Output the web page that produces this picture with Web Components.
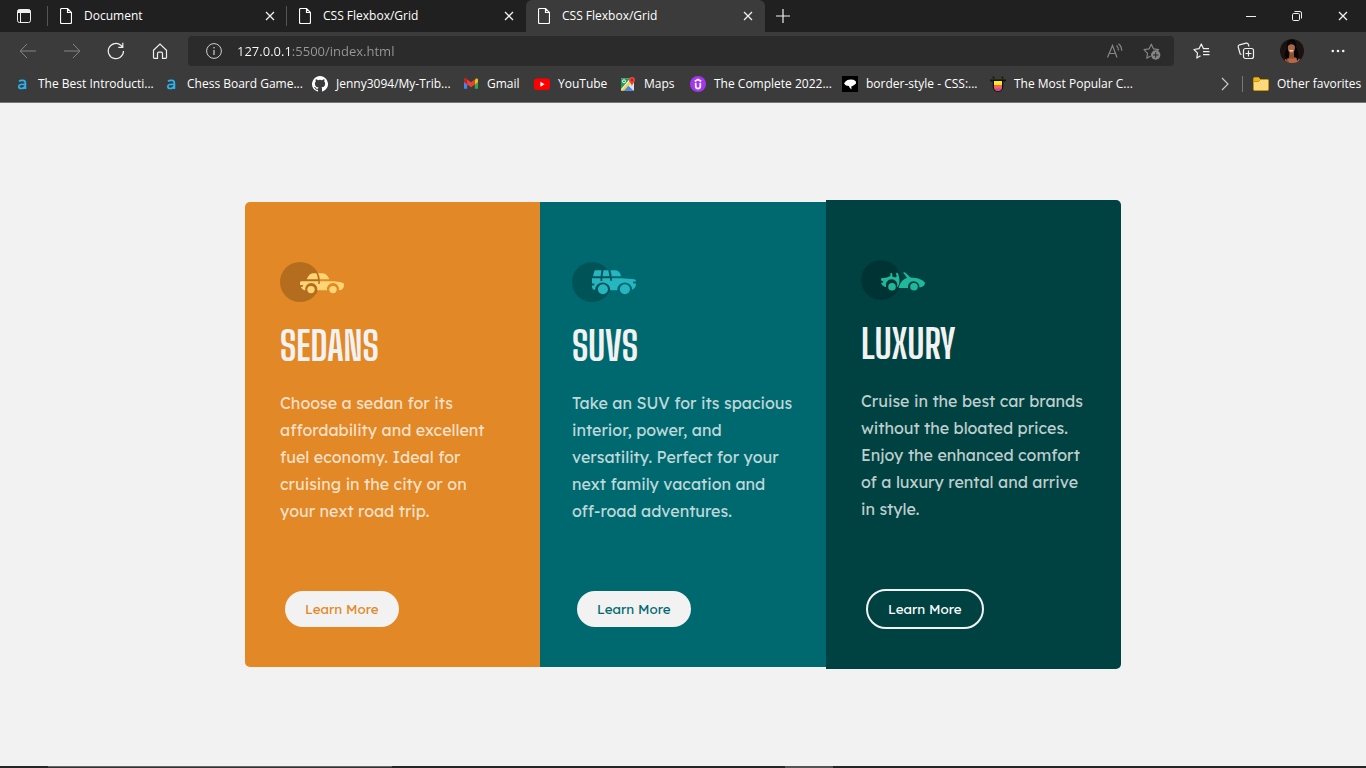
<!DOCTYPE html>
<html lang="en">
<head>
<meta charset="utf-8">
<title>CSS Flexbox/Grid</title>
<style>
  html, body { height: 100%; margin: 0; }
  body { background: #f2f2f2; --ui: "Segoe UI", Selawik, "Open Sans", "Noto Sans", sans-serif; }
</style>
</head>
<body>
<browser-window>
  <tab-strip slot="tabs">
    <browser-tab>Document</browser-tab>
    <browser-tab>CSS Flexbox/Grid</browser-tab>
    <browser-tab active>CSS Flexbox/Grid</browser-tab>
  </tab-strip>
  <tool-bar slot="toolbar"></tool-bar>
  <favorites-bar slot="favorites">
    <book-mark icon="letter" style="--w:149px">The Best Introducti...</book-mark>
    <book-mark icon="letter" style="--w:149px">Chess Board Game...</book-mark>
    <book-mark icon="github" style="--w:151px">Jenny3094/My-Trib...</book-mark>
    <book-mark icon="gmail" style="--w:71px">Gmail</book-mark>
    <book-mark icon="youtube" style="--w:86px">YouTube</book-mark>
    <book-mark icon="maps" style="--w:70px">Maps</book-mark>
    <book-mark icon="udemy" style="--w:152px">The Complete 2022...</book-mark>
    <book-mark icon="csstricks" style="--w:148px">border-style - CSS:...</book-mark>
    <book-mark icon="tongue" style="--w:149px">The Most Popular C...</book-mark>
    <book-mark slot="end" icon="folder" style="--w:105px">Other favorites</book-mark>
  </favorites-bar>
  <card-row>
    <car-card kind="sedans">
      <span slot="title">SEDANS</span>
      <span>Choose a sedan for its<br>affordability and excellent<br>fuel economy. Ideal for<br>cruising in the city or on<br>your next road trip.</span>
    </car-card>
    <car-card kind="suvs">
      <span slot="title">SUVS</span>
      <span>Take an SUV for its spacious<br>interior, power, and<br>versatility. Perfect for your<br>next family vacation and<br>off-road adventures.</span>
    </car-card>
    <car-card kind="luxury">
      <span slot="title">LUXURY</span>
      <span>Cruise in the best car brands<br>without the bloated prices.<br>Enjoy the enhanced comfort<br>of a luxury rental and arrive<br>in style.</span>
    </car-card>
  </card-row>
  <task-edge slot="edge"></task-edge>
</browser-window>

<script>
const stroke = 'fill="none" stroke="currentColor"';
/* name: [width, height, markup] */
const ICONS = {
  workspace: [16, 16, `<rect x="1.5" y="1.5" width="13" height="13" rx="2" ${stroke}/><path d="M1.5 5V3.5a2 2 0 0 1 2-2h9a2 2 0 0 1 2 2V5z" fill="currentColor"/><path d="M4.5 5v9.5" ${stroke}/>`],
  page: [12, 16, `<path d="M1.5.5h6l4 4v9.700a1.300 1.300 0 0 1-1.300 1.300h-8.400a1.300 1.300 0 0 1-1.300-1.300v-12.400A1.300 1.300 0 0 1 1.500.5zM7.500.5v4h4" ${stroke} stroke-width="1.200"/>`],
  close: [10, 10, `<path d="M1 1l8 8M9 1l-8 8" ${stroke} stroke-width="1.300"/>`],
  plus: [14, 14, `<path d="M7 0v14M0 7h14" ${stroke} stroke-width="1.200"/>`],
  minimize: [10, 10, `<path d="M0 5.500h10" ${stroke}/>`],
  restore: [10, 10, `<rect x=".5" y="2.500" width="7" height="7" rx="1.200" ${stroke}/><path d="M2.500.5H8A1.500 1.500 0 0 1 9.500 2v5.500" ${stroke}/>`],
  back: [18, 16, `<path d="M17 8H1.500M8 1L1.200 8 8 15" ${stroke}/>`],
  forward: [18, 16, `<path d="M1 8h15.500M10 1l6.800 7L10 15" ${stroke}/>`],
  refresh: [18, 18, `<path d="M16.500 9a7.600 7.600 0 1 1-2.600-5.700l1.600 1.700M15.800.8V5.300H11.300" ${stroke} stroke-width="1.200"/>`],
  home: [16, 16, `<path d="M1.500 7.200L8 1l6.500 6.200v7.300a.8.8 0 0 1-.8.8H10.500V10.500A1.300 1.300 0 0 0 9.200 9.200H6.800A1.300 1.300 0 0 0 5.500 10.500v4.800H2.300a.8.8 0 0 1-.8-.8z" ${stroke} stroke-width="1.200"/>`],
  info: [16, 16, `<circle cx="8" cy="8" r="7.400" ${stroke}/><path d="M8 7v5" ${stroke} stroke-width="1.200"/><circle cx="8" cy="4.800" r=".8" fill="currentColor"/>`],
  read: [18, 16, `<path d="M1.500 14.500L6.500 2.500 11 14.500M3 10.500h6.500M10.500 2.500a6 6 0 0 1 2 5M12.500.8a9 9 0 0 1 3.200 7" ${stroke} stroke-width="1.200"/>`],
  starplus: [18, 18, `<path d="M7.500 14L3.800 16.200 4.500 11.300 1 7.700l5-.8L8.300 2.200l2.300 4.700 5 .8-1.500 1.500" ${stroke} stroke-width="1.200" stroke-linejoin="round"/><circle cx="12.700" cy="13" r="4.700" fill="currentColor"/><path d="M12.700 10.300v5.400M10 13h5.400" stroke="#2b2b2b"/>`],
  starlist: [18, 18, `<path d="M7.500 13.800L3.800 16 4.500 11.100 1 7.500l5-.8L8.300 2l2.200 4.700H16M10 9.700h6.500M10 12.700h6.500" ${stroke} stroke-width="1.200" stroke-linejoin="round"/>`],
  collections: [18, 18, `<rect x="6.500" y="6.500" width="10" height="10" rx="2" ${stroke} stroke-width="1.200"/><path d="M11.500 8.500v6M8.500 11.500h6M4.500 12.500L3.200 12 1.200 5A2 2 0 0 1 2.500 2.800L9 1.200A2 2 0 0 1 11.400 2.500L12 4.500" ${stroke} stroke-width="1.200"/>`],
  avatar: [24, 24, `<defs><clipPath id="c"><circle cx="12" cy="12" r="12"/></clipPath></defs><g clip-path="url(#c)"><path d="M0 0h24v24H0z" fill="#1b1312"/><path d="M7 8C6 3 9 0 12 .5s5 3 4 8c3 4 2 9 1 12H8C4 17 6 12 7 8z" fill="#080606"/><path d="M9.500 13h4.500v5l6 2v4H5v-4l4-1z" fill="#91512f"/><path d="M8 20l10-1 2 5H9z" fill="#b8684a"/><ellipse cx="11.400" cy="9" rx="3.600" ry="5.400" fill="#a96849"/><path d="M7.500 7c0-4 7-6 8.500 1-2-3-5-4-8.500-1z" fill="#0b0808"/><path d="M9.200 11.200h4.400a2.300 2 0 0 1-4.400 0z" fill="#fff2e8"/><path d="M14.500 11c3 4 1 7 3 11 3-4 0-10-2-14zM8 12c-1 3-2 5-1 9-4-3-2-8 0-11z" fill="#080606"/></g>`],
  dots: [14, 4, `<circle cx="1.800" cy="2" r="1.300" fill="currentColor"/><circle cx="7" cy="2" r="1.300" fill="currentColor"/><circle cx="12.200" cy="2" r="1.300" fill="currentColor"/>`],
  chevron: [8, 14, `<path d="M1 1l6 6-6 6" fill="none" stroke="#c8c8c8" stroke-width="1.200"/>`],
  letter: [16, 16, `<path d="M5 5.300C6.500 4 11.400 3.500 11.400 7v6M11.400 8.300C8.500 8.300 4.800 8 4.800 10.500 4.800 13 9.500 13.500 11.300 10" fill="none" stroke="#2bb3ee" stroke-width="1.700"/>`],
  github: [16, 16, `<path fill="#fff" d="M8 0a8 8 0 0 0-2.530 15.590c.4.070.550-.170.550-.380v-1.490c-2.010.370-2.530-.490-2.690-.940-.090-.230-.480-.940-.820-1.130-.280-.150-.680-.520-.010-.530.630-.010 1.080.580 1.230.820.720 1.210 1.870.870 2.330.660.070-.520.280-.870.510-1.070-1.780-.200-3.640-.890-3.640-3.950 0-.870.310-1.590.820-2.150-.080-.200-.360-1.020.080-2.120 0 0 .670-.210 2.200.820a7.600 7.600 0 0 1 4 0c1.530-1.040 2.200-.820 2.200-.820.440 1.100.160 1.920.080 2.120.510.560.820 1.270.820 2.150 0 3.070-1.870 3.750-3.650 3.950.290.250.540.730.540 1.480v2.190c0 .210.150.460.550.380A8 8 0 0 0 8 0z"/>`],
  gmail: [16, 16, `<path d="M1 4.500v8.300h3.200V6.500z" fill="#4285f4"/><path d="M15 4.500v8.300h-3.200V6.500z" fill="#34a853"/><path d="M11.800 4.600v3.800L15 6V4c0-1.500-1.700-1.800-2.500-1z" fill="#fbbc04"/><path d="M1 4c0-1.500 1.700-1.800 2.500-1L8 6.300 11.800 3.500v4.900L8 11.200 4.200 8.400 1 6z" fill="#ea4335"/><path d="M1 4c0-1.500 1.700-1.800 2.500-1l.7.500v4.900L1 6z" fill="#c5221f"/>`],
  youtube: [16, 16, `<rect y="2.500" width="16" height="11.500" rx="3" fill="#f00"/><path d="M6.400 5.800v5l4.200-2.500z" fill="#fff"/>`],
  maps: [16, 16, `<path d="M1 2.500h13v12H1z" fill="#e8eaed"/><path d="M1 2.500h9L1 13z" fill="#1e9c55"/><path d="M1 14.500L10.500 4l1.500 3-8 7.500z" fill="#fdd041"/><path d="M4 14.500l4.500-4.700 5 4.700z" fill="#4285f4"/><path d="M8.700 9.700l5.300 4.800V8l-2-2z" fill="#e1e3e6"/><circle cx="4" cy="5.300" r="1.500" fill="none" stroke="#fff"/><path d="M12 10.500C11.800 7.500 9 6.500 9 4a3 3 0 0 1 6 0c0 2.500-2.800 3.500-3 6.500z" fill="#e54335"/><circle cx="12" cy="4" r="1" fill="#8a1f18"/>`],
  udemy: [16, 16, `<circle cx="8" cy="8" r="8" fill="#a435f0"/><path d="M4.800 5.300L8 3.500l3.200 1.800M5.700 6.800v3.500a2.300 2.300 0 0 0 4.600 0V6.800" fill="none" stroke="#fff" stroke-width="1.700"/>`],
  csstricks: [16, 16, `<path d="M0 0h16v16H0z" fill="#000"/><path d="M2 7.500l1.500-2L5.500 4l3-.6 3 .4 2.300 1.500.2 2.200-1.500 1.200L10.500 10l-1.200.5L9.500 13.500 7.500 11.500 7 10 4 9.500z" fill="#fff"/>`],
  tongue: [16, 16, `<path d="M0 4.300h16M1.500 4.500v1M14.500 4.500v1" stroke="#111" stroke-width="1.400"/><circle cx="3.500" cy="1.500" r="1" fill="#111"/><circle cx="12.500" cy="1.500" r="1" fill="#111"/><path d="M2.700 4.500h10.600v6a5.300 5.300 0 0 1-10.600 0z" fill="#111"/><path d="M4 5h8v5H4z" fill="#ffe81c"/><path d="M4 9h8v2a4 4 0 0 1-8 0z" fill="#fb6060"/><path d="M4.600 12.500h6.800A4 4 0 0 1 4.600 12.500z" fill="#a64cb5"/>`],
  folder: [16, 16, `<path d="M.5 3A1.500 1.500 0 0 1 2 1.500h3.500l2 2h7A1 1 0 0 1 15.500 4.500v8.800a1.200 1.200 0 0 1-1.200 1.200H1.700A1.200 1.200 0 0 1 .5 13.300z" fill="#ffd97b" stroke="#c99500"/><path d="M.5 5.500V3A1.500 1.500 0 0 1 2 1.500h3.500l2 2-2 2z" fill="#edb91a" stroke="#c99500"/>`],
  sedans: [64, 40, `<circle cx="20" cy="20" r="20" fill-opacity=".2"/><g fill="#ffd473"><path d="M26.700 17.300c1.400-3.400 3.300-5.700 6.300-6h3.300c1 1.800 1.500 3.800 1.500 6zM38 11.300h4.500c3.500.2 5.500 2.800 6.800 6h-9.500c0-2.100-.5-4.200-1.800-6z"/><path fill-rule="evenodd" d="M21 19.300h17.300V22h1.500v-2.700h11.500c4 0 8 .6 11 1.400 1.500.4 1.700 1 1.700 2.300 0 3-1.500 4.700-4.500 5.300h-.7a6 6 0 1 0-11.700 0h-10a6 6 0 1 0-11.700 0h-.7c-2-.6-3.400-2-3.700-3.600h1.300c1.300 0 1.300-1.700 0-1.700H20v-1.700c0-1 .4-1.600 1-2z"/><circle cx="31" cy="27.600" r="3.700"/><circle cx="53" cy="27.600" r="3.700"/></g>`],
  suvs: [64, 40, `<circle cx="20" cy="20" r="20" fill-opacity=".2"/><g fill="#27b5c0"><path d="M21 14.300l1.200-4.700c.3-.9.900-1.300 1.800-1.300h5.500l-.9 6zM31.500 8.300h4.800l1.200 6h-7zM38.600 8.300h5c3 .2 4.800 2.500 5.500 6h-9.300z"/><path d="M20 16.300h8.500v3.600a8 8 0 0 0-2.200 1.900l1.500 1M20 16.300h8.500v2.800h1.800v-2.800H38l.3 2.500h1.900l-.4-2.500H50l12 .9c1.500.2 2 .9 2 2.400h-2c-1.300 0-1.300 2 0 2h2c0 2.800-1 5-3.700 6.200a7.600 7.600 0 1 0-15.200.4h-6.800a7.600 7.600 0 1 0-15.200-.4h-.8C21 27.400 20 26.500 20 25v-1.400h1.500c1.300 0 1.300-2 0-2H20z"/><circle cx="30.900" cy="27.300" r="5"/><circle cx="52.900" cy="27.300" r="5"/></g>`],
  luxury: [64, 40, `<circle cx="20" cy="20" r="20" fill-opacity=".2"/><g fill="#1fb89d"><path d="M20 19.400c0-1 .7-1.400 2-1.400h.6c2 0 4.500-.7 6.700-2v-2c0-1.500 2-1.500 2 0v2.300c1 1.300 3.500 1.300 4.400.1l-.6-2.300c-.3-1.400 1.700-1.900 2.100-.4 1.700 5 1.700 7.800.6 11.300l-1.200 2h-.5a5.800 5.800 0 1 0-11 0h-.7c-2.100-.5-4-2.300-4.300-4.200l1.500-.1c.8-.2.800-1.200 0-1.600L20 20.600z"/><path d="M42.500 12.500c1-.8 1.700 0 2.300.6l4.700 4.300c7 .3 12 1.700 14.500 5.400 0 2.700-2 4.600-5.600 4.800a5.800 5.800 0 1 0-11.500.3h-9.300c1.500-4.600 3.500-8.500 8.500-9.800l-2.800-4c-.6-.6-1.300-1-.8-1.600z"/><circle cx="31" cy="26.700" r="3.800"/><circle cx="53" cy="26.700" r="3.800"/></g>`]
};

/* Registers an element whose shadow root is cloned from a template. */
function define(name, markup, setup) {
  const template = document.createElement('template');
  template.innerHTML = markup;
  customElements.define(name, class extends HTMLElement {
    constructor() {
      super();
      this.attachShadow({ mode: 'open' }).append(template.content.cloneNode(true));
    }
    connectedCallback() { if (setup) setup(this, this.shadowRoot); }
  });
}

define('line-icon', `<style>:host{display:inline-flex;flex:none}svg{display:block}</style>`, (el, root) => {
  const [w, h, body] = ICONS[el.getAttribute('name')];
  root.querySelector('svg')?.remove();
  root.append(document.createRange().createContextualFragment(
    `<svg width="${w}" height="${h}" viewBox="0 0 ${w} ${h}" aria-hidden="true">${body}</svg>`));
});

define('icon-button', `<style>
  :host{display:flex;flex:none;width:var(--size,44px);align-self:stretch;color:#f0f0f0}
  :host([dim]){color:#858585}
  button{flex:1;display:flex;align-items:center;justify-content:center;padding:0;border:0;background:none;color:inherit}
</style><button type="button"></button>`, (el, root) => {
  const button = root.querySelector('button');
  button.setAttribute('aria-label', el.getAttribute('label'));
  button.innerHTML = `<line-icon name="${el.getAttribute('icon')}"></line-icon>`;
});

define('browser-window', `<style>
  :host{display:flex;flex-direction:column;min-height:100vh}
  main{flex:1;display:flex;align-items:center;justify-content:center}
</style>
<slot name="tabs"></slot><slot name="toolbar"></slot><slot name="favorites"></slot>
<main><slot></slot></main><slot name="edge"></slot>`);

define('tab-strip', `<style>
  :host{display:flex;height:32px;background:#202020;color:#fff}
  .lead{display:flex;border-right:1px solid #555;margin:6px 0}
  nav{display:flex;min-width:0}
  .space{flex:1}
</style>
<div class="lead"><icon-button icon="workspace" label="Tab actions" style="--size:47px"></icon-button></div>
<nav aria-label="Tabs"><slot></slot></nav>
<icon-button icon="plus" label="New tab" style="--size:35px"></icon-button>
<div class="space"></div>
<icon-button icon="minimize" label="Minimize" style="--size:46px"></icon-button>
<icon-button icon="restore" label="Restore" style="--size:46px"></icon-button>
<icon-button icon="close" label="Close" style="--size:46px"></icon-button>`);

define('browser-tab', `<style>
  :host{display:flex;align-items:center;flex:0 1 239px;width:239px;box-sizing:border-box;color:#fff}
  :host([active]){background:#3b3b3b;border-radius:6px 6px 0 0}
  .tab{flex:1;display:flex;align-items:center;gap:12px;height:32px;padding:0 0 0 12px;border:0;background:none;color:inherit;font:12px/16px var(--ui);text-align:left;white-space:nowrap}
  :host(:first-child) i{background:#555}
  i{width:1px;height:20px}
</style><button class="tab" type="button"><line-icon name="page"></line-icon><span><slot></slot></span></button>
<icon-button icon="close" label="Close tab" style="--size:32px"></icon-button><i></i>`);

define('tool-bar', `<style>
  :host{display:flex;align-items:center;height:38px;padding:0 6px;background:#3b3b3b}
  address-bar{flex:1;margin:0 6px}
</style>
<icon-button dim icon="back" label="Back"></icon-button>
<icon-button dim icon="forward" label="Forward"></icon-button>
<icon-button icon="refresh" label="Refresh"></icon-button>
<icon-button icon="home" label="Home"></icon-button>
<address-bar></address-bar>
<icon-button icon="starlist" label="Favorites"></icon-button>
<icon-button icon="collections" label="Collections"></icon-button>
<icon-button icon="avatar" label="Profile" style="--size:48px"></icon-button>
<icon-button icon="dots" label="Settings and more"></icon-button>`);

define('address-bar', `<style>
  :host{display:flex;align-items:center;height:30px;padding-right:2px;border-radius:4px;background:#2b2b2b;color:#d0d0d0}
  label{flex:1;display:flex;align-items:center;gap:15px;padding-left:18px}
  input{flex:1;min-width:0;height:24px;padding:0;border:0;outline:0;
    font:13px/24px var(--ui);color:#fff;-webkit-text-fill-color:transparent;
    background:linear-gradient(90deg,#fff 55px,#999 55px);-webkit-background-clip:text;background-clip:text}
</style>
<label><line-icon name="info"></line-icon><input type="text" aria-label="Address" value="127.0.0.1:5500/index.html"></label>
<icon-button dim icon="read" label="Read aloud" style="--size:34px"></icon-button>
<icon-button dim icon="starplus" label="Add to favorites" style="--size:40px"></icon-button>`);

define('favorites-bar', `<style>
  :host{display:flex;align-items:center;height:33px;padding:0 8px 4px 14px;box-sizing:border-box;background:#3b3b3b;border-bottom:1px solid #777}
  nav{flex:1;display:flex;min-width:0;overflow:hidden}
  i{width:1px;height:16px;margin-right:10px;background:#777}
</style>
<nav aria-label="Favorites"><slot></slot></nav>
<icon-button icon="chevron" label="More favorites" style="--size:34px"></icon-button><i></i>
<slot name="end"></slot>`);

define('book-mark', `<style>
  :host{display:flex;flex:none;width:var(--w)}
  a{display:flex;align-items:center;gap:8px;color:#fff;text-decoration:none;font:12px/16px var(--ui);white-space:nowrap}
</style><a href="#"><span class="icon"></span><span><slot></slot></span></a>`, (el, root) => {
  root.querySelector('.icon').outerHTML = `<line-icon name="${el.getAttribute('icon')}"></line-icon>`;
});

define('card-row', `<style>
  :host{display:grid;grid-template-columns:295fr 286fr 295fr;align-items:center;width:90%;max-width:876px}
</style><slot></slot>`);

define('car-card', `<style>
  :host{display:block;padding:60px 0 40px 35px;color:#f2f2f2;background:var(--tone);
    font-family:"Lexend Deca",Inter,sans-serif}
  :host([kind=sedans]){--tone:#e28826;border-radius:5px 0 0 5px}
  :host([kind=suvs]){--tone:#00696f;padding-left:32px}
  :host([kind=luxury]){--tone:#004241;border-radius:0 5px 5px 0}
  .icon{height:40px}
  h2{margin:17px 0;font:bold 40px/54px "Big Shoulders Display","Roboto Condensed","Liberation Sans Narrow",sans-serif}
  p{margin:0 0 66px;font-size:16px;line-height:27px;color:rgba(255,255,255,.75);white-space:nowrap}
  button{display:block;margin-left:5px;height:36px;padding:0 20px;border:0;border-radius:25px;
    background:#f2f2f2;color:var(--tone);font-family:inherit}
  :host([kind=luxury]) button{height:40px;border:2px solid #f2f2f2;background:none;color:#fff}
</style>
<div class="icon"></div><h2><slot name="title"></slot></h2><p><slot></slot></p>
<button type="button">Learn More</button>`, (el, root) => {
  root.querySelector('.icon').innerHTML = `<line-icon name="${el.getAttribute('kind')}"></line-icon>`;
});

define('task-edge', `<style>
  :host{display:grid;grid-template-columns:48fr 344fr 393fr 48fr 533fr;height:2px;background:#252525}
  i:nth-of-type(2){border-top:1px solid #666;background:#333}
  i:nth-of-type(4){background:#555}
</style><i></i><i></i><i></i><i></i><i></i>`);
</script>
</body>
</html>
